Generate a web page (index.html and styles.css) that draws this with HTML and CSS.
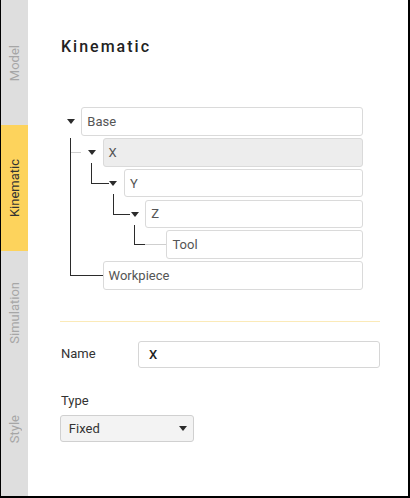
FILE: index.html
```html
<!DOCTYPE html>
<html>
<head>
<meta charset="utf-8">
<link rel="stylesheet" href="styles.css">
</head>
<body>
<div class="app">
  <nav class="sidebar">
    <div class="tab"><span class="tab-label">Model</span></div>
    <div class="tab active"><span class="tab-label">Kinematic</span></div>
    <div class="tab"><span class="tab-label">Simulation</span></div>
    <div class="tab last"><span class="tab-label">Style</span></div>
  </nav>
  <main class="panel">
    <h1 class="title">Kinematic</h1>
    <div class="tree">
      <div class="row">
        <span class="cell toggle"><i class="tri"></i></span>
        <div class="node">Base</div>
      </div>
      <div class="row">
        <span class="cell through-branch-light"></span>
        <span class="cell toggle toggle-stub"><i class="tri"></i></span>
        <div class="node selected">X</div>
      </div>
      <div class="row">
        <span class="cell through"></span>
        <span class="cell elbow"></span>
        <span class="cell toggle toggle-lead-stub"><i class="tri"></i></span>
        <div class="node">Y</div>
      </div>
      <div class="row">
        <span class="cell through"></span>
        <span class="cell"></span>
        <span class="cell elbow"></span>
        <span class="cell toggle toggle-lead-stub"><i class="tri"></i></span>
        <div class="node">Z</div>
      </div>
      <div class="row">
        <span class="cell through"></span>
        <span class="cell"></span>
        <span class="cell"></span>
        <span class="cell elbow"></span>
        <span class="cell leaf-light"></span>
        <div class="node">Tool</div>
      </div>
      <div class="row">
        <span class="cell elbow"></span>
        <span class="cell leaf"></span>
        <div class="node">Workpiece</div>
      </div>
    </div>
    <hr class="sep">
    <div class="field-row">
      <span class="label name-label">Name</span>
      <div class="input">X</div>
    </div>
    <span class="label type-label">Type</span>
    <div class="select"><span>Fixed</span><i class="caret"></i></div>
  </main>
</div>
</body>
</html>
```
FILE: styles.css
```css
html, body {
  margin: 0;
  padding: 0;
  background: #fff;
}

.app {
  width: 410px;
  height: 498px;
  box-sizing: border-box;
  border-left: 1px solid #000;
  border-right: 2px solid #000;
  border-bottom: 2px solid #000;
  display: flex;
  font-family: Roboto, "Liberation Sans", sans-serif;
  overflow: hidden;
}

/* ---------- sidebar ---------- */
.sidebar {
  flex: 0 0 27px;
  background: #dedede;
  display: flex;
  flex-direction: column;
}

.tab {
  flex: 0 0 125.3px;
  display: flex;
  align-items: center;
  justify-content: center;
  color: #a6a6a6;
}

.tab.last {
  flex: 1 1 auto;
  padding-bottom: 13px;
}

.tab.active {
  background: #fdd35c;
  color: #333;
}

.tab-label {
  writing-mode: vertical-rl;
  transform: rotate(180deg);
  font-size: 13px;
  line-height: 16px;
}

/* ---------- panel ---------- */
.panel {
  flex: 1 1 auto;
  padding: 37px 28px 0 33px;
  display: flex;
  flex-direction: column;
  align-items: flex-start;
}

.title {
  margin: 0;
  font-size: 16px;
  line-height: 20px;
  font-weight: 500;
  letter-spacing: 2px;
  color: #222;
}

/* ---------- tree ---------- */
.tree {
  align-self: stretch;
  margin: 50.3px 17px 0 -1px;
}

.row {
  display: flex;
  height: 30.8px;
}

.cell {
  flex: 0 0 21.3px;
  height: 100%;
  background-repeat: no-repeat;
}

.toggle {
  display: flex;
  justify-content: center;
  align-items: flex-start;
}

.tri {
  display: block;
  margin-top: 12px;
  width: 0;
  height: 0;
  border-left: 4px solid transparent;
  border-right: 4px solid transparent;
  border-top: 5px solid #2b2b2b;
}

.through {
  background-image: linear-gradient(#2b2b2b, #2b2b2b);
  background-position: 10px 0;
  background-size: 1px 100%;
}

.through-branch-light {
  background-image: linear-gradient(#2b2b2b, #2b2b2b), linear-gradient(#cfcfcf, #cfcfcf);
  background-position: 10px 0, 11px 14px;
  background-size: 1px 100%, 10px 1px;
}

.elbow {
  background-image: linear-gradient(#2b2b2b, #2b2b2b), linear-gradient(#2b2b2b, #2b2b2b);
  background-position: 10px 0, 10px 14px;
  background-size: 1px 15px, calc(100% - 10px) 1px;
}

.toggle-stub {
  background-image: linear-gradient(#2b2b2b, #2b2b2b);
  background-position: 10px 25px;
  background-size: 1px 6px;
}

.toggle-lead-stub {
  background-image: linear-gradient(#2b2b2b, #2b2b2b), linear-gradient(#2b2b2b, #2b2b2b);
  background-position: 0 14px, 10px 25px;
  background-size: 6px 1px, 1px 6px;
}

.leaf {
  background-image: linear-gradient(#2b2b2b, #2b2b2b);
  background-position: 0 14px;
  background-size: 100% 1px;
}

.leaf-light {
  background-image: linear-gradient(#2b2b2b, #2b2b2b), linear-gradient(#cfcfcf, #cfcfcf);
  background-position: 0 14px, 0 14px;
  background-size: 0 1px, 100% 1px;
}

.node {
  flex: 1 1 auto;
  height: 28.5px;
  box-sizing: border-box;
  border: 1px solid #dadada;
  border-radius: 3px;
  background: #fff;
  padding-left: 5px;
  display: flex;
  align-items: center;
  font-size: 13px;
  color: #555;
}

.node.selected {
  background: #ededed;
}

/* ---------- form ---------- */
.sep {
  align-self: stretch;
  border: 0;
  height: 1px;
  background: #fbeab8;
  margin: 28.6px 0 0 -1px;
}

.field-row {
  align-self: stretch;
  display: flex;
  align-items: center;
  margin-top: 19.6px;
}

.label {
  font-size: 13px;
  line-height: 16px;
  color: #333;
}

.name-label {
  flex: 0 0 77px;
}

.input {
  flex: 1 1 auto;
  height: 26.4px;
  box-sizing: border-box;
  border: 1px solid #d6d6d6;
  border-radius: 3px;
  padding-left: 10px;
  display: flex;
  align-items: center;
  font-size: 13px;
  font-weight: 500;
  color: #222;
}

.type-label {
  display: block;
  margin-top: 25px;
}

.select {
  margin-top: 6.5px;
  margin-left: -0.7px;
  width: 133.4px;
  height: 26.4px;
  box-sizing: border-box;
  border: 1px solid #d0d0d0;
  border-radius: 3px;
  background: #f3f3f3;
  padding: 0 6px 0 7.5px;
  display: flex;
  align-items: center;
  justify-content: space-between;
  font-size: 13px;
  color: #333;
}

.caret {
  display: block;
  width: 0;
  height: 0;
  border-left: 4.5px solid transparent;
  border-right: 4.5px solid transparent;
  border-top: 5px solid #2b2b2b;
}
```
